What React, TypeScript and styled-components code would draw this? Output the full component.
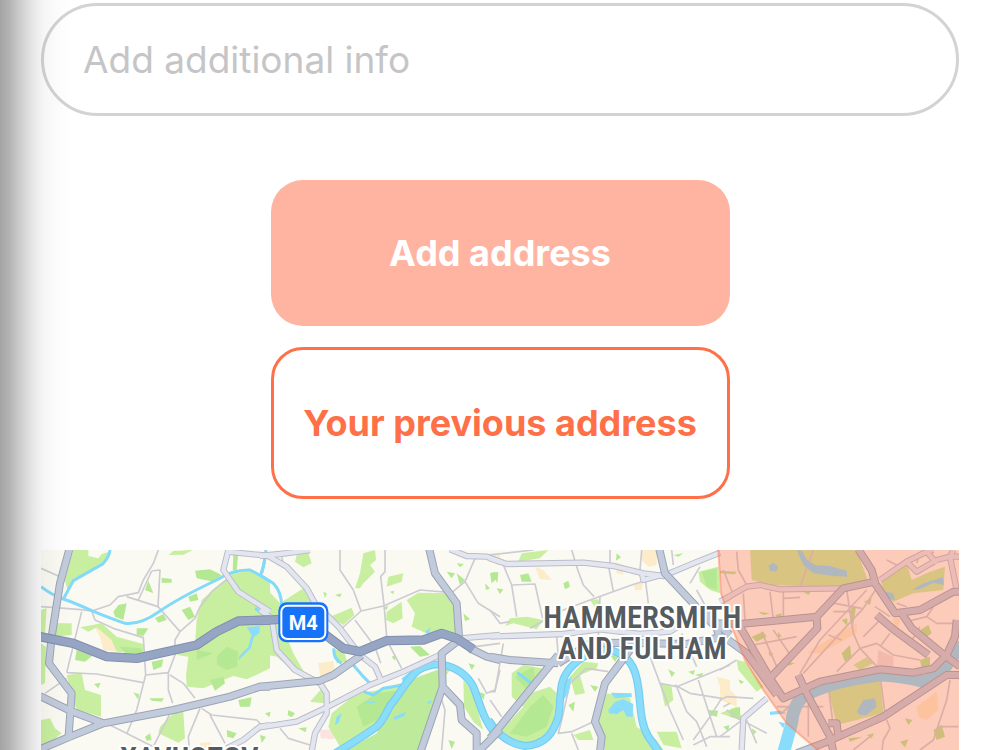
import React from "react";
import styled, { createGlobalStyle, css } from "styled-components";

const GlobalStyle = createGlobalStyle`
  *, *::before, *::after { box-sizing: border-box; }
  body {
    margin: 0;
    background: #ffffff;
    font-family: Inter, "Liberation Sans", sans-serif;
  }
`;

const Page = styled.main`
  position: relative;
  padding: 3px 41px 0;
`;

const EdgeShadow = styled.div`
  position: absolute;
  inset: 0 auto 0 0;
  width: 72px;
  pointer-events: none;
  background: linear-gradient(
    to right,
    rgba(0, 0, 0, 0.36) 0,
    rgba(0, 0, 0, 0.29) 10px,
    rgba(0, 0, 0, 0.19) 21px,
    rgba(0, 0, 0, 0.1) 32px,
    rgba(0, 0, 0, 0.04) 43px,
    rgba(0, 0, 0, 0.015) 56px,
    rgba(0, 0, 0, 0) 72px
  );
`;

const Form = styled.form`
  display: flex;
  flex-direction: column;
  align-items: center;
  gap: 64px;
`;

const InfoInput = styled.input`
  width: 100%;
  height: 113px;
  padding: 0 39px;
  border: 3px solid #d3d3d5;
  border-radius: 57px;
  background: #ffffff;
  color: #333333;
  font: 400 37px/44px Inter, "Liberation Sans", sans-serif;
  outline: none;

  &::placeholder {
    color: #c5c5c7;
    opacity: 1;
  }
`;

const Actions = styled.div`
  display: flex;
  flex-direction: column;
  gap: 21px;
  width: 50%;
`;

const ActionButton = styled.button<{ $outlined?: boolean }>`
  padding: 51px 0;
  border: 0;
  border-radius: 32px;
  background: #ffb4a2;
  color: #ffffff;
  font: 700 36px/44px Inter, "Liberation Sans", sans-serif;
  white-space: nowrap;
  cursor: pointer;

  ${({ $outlined }) =>
    $outlined &&
    css`
      border: 3px solid #ff7048;
      background: #ffffff;
      color: #ff7048;
    `}
`;

const MapFrame = styled.section`
  margin-top: 51px;
`;

const MapDrawing = styled.svg`
  display: block;
  width: 100%;
  height: auto;
`;

const AreaLabel = styled.text`
  font-family: "Liberation Sans Narrow", "Roboto Condensed", "DejaVu Sans Condensed", sans-serif;
  font-weight: 600;
  font-size: 92px;
  fill: #555b5e;
  stroke: #ffffff;
  stroke-width: 12px;
  stroke-linejoin: round;
  paint-order: stroke;
`;

const RoadSign = styled.text`
  font-family: Roboto, "Noto Sans", sans-serif;
  font-weight: 700;
  font-size: 60px;
  fill: #ffffff;
`;

/* The map is drawn in four side by side sheets; x is the left edge of each. */
type Sheet = { x: number; d: string };

const lightParks: Sheet[] = [
  { x: 0, d: "M130 30L175 30 175 48 205 55 215 42 238 35 222 75 130 122 112 150 105 120zM415 45L430 33 490 30 460 44zM75 250L125 250 125 285 70 290zM150 262L215 250 260 290 340 312 340 340 260 335 245 300 200 262 175 275zM500 240L515 180 560 140 590 118 610 100 660 92 720 130 720 385 650 418 610 408 520 445 470 440 468 405 475 350 440 345 495 315zM110 405L155 400 165 450 213 465 213 530 140 510 125 470zM33 210L50 205 45 280 33 280zM33 310L48 320 45 430 33 435zM33 540L60 535 75 565 95 580 70 600 33 628zM390 560L430 520 460 515 465 595 445 608 385 580z" },
  { x: 690, d: "M0 125L60 190 130 145 160 190 150 240 60 240 100 340 140 410 110 400 50 350 30 250 0 220zM110 45L145 38 155 70 130 82 105 65zM310 40L345 30 348 60 330 75 345 95 310 130 300 145 285 145 300 100zM385 110L430 100 425 125 380 140zM380 215L425 185 428 235 400 250 378 240zM210 230L275 203 283 225 250 255zM440 180L475 158 580 160 590 285 540 270 510 285 455 260 465 220zM220 330L250 330 262 365 230 370zM215 520L290 460 360 450 420 430 440 440 365 540 240 620 205 560zM150 485L190 440 195 490zM540 390L570 390 545 425zM610 420L635 450 650 500 670 570 640 545 612 500zM0 260L35 260 50 350 0 340z" },
  { x: 1380, d: "M95 40L175 30 150 55 85 65zM60 235L110 230 160 240 140 268 70 250 45 258zM625 95L685 80 690 160 660 150 630 125zM300 180L325 178 340 230 320 210zM65 400L100 375 155 385 145 430 120 460 180 440 200 460 190 560 140 605 80 610 35 570 100 500 65 470zM240 410L280 365 325 370 320 385 270 405 285 460 255 465zM350 460L420 475 440 560 500 600 520 630 345 630 325 540zM510 430L545 440 550 480 525 500zM250 585L300 570 310 600 265 600zM500 575L560 575 575 625 520 615z" },
  { x: 2070, d: "M90 30L410 30 445 125 370 140 240 138 150 135 95 120zM485 120L560 70 575 120 630 95 675 80 670 150 580 160 520 185 485 150zM325 450L480 410 490 520 350 555zM50 360L75 365 130 440 110 455 55 390zM400 375L440 352 460 370 420 390zM0 520L50 500 70 540 30 530z" },
];

const midParks: Sheet[] = [
  { x: 0, d: "M495 92L540 88 575 105 550 125 500 115zM345 150L355 122 370 160zM395 113L425 117 425 128 395 128zM250 215L265 195 290 190 280 240 255 230zM455 210L480 200 495 230 475 240zM475 170L500 160 505 180 480 185zM320 265L355 265 340 288 320 285zM375 235L400 222 410 240 385 248zM75 290L120 295 125 320 80 315zM140 330L190 345 165 365 135 360zM270 320L335 325 335 342 290 345zM560 350L590 320 625 335 620 380 590 390 562 375zM500 330L550 340 500 360zM540 420L580 410 585 430 555 452zM365 365L400 358 395 380 370 390zM192 432L212 428 205 445zM310 457L327 463 325 480zM358 475L402 475 395 485 365 482zM345 590L360 580 365 600 350 602zM625 480L665 472 660 500 630 500zM610 45L625 35 620 95 608 90zM590 570L620 580 610 595 592 590z" },
  { x: 690, d: "M190 155L200 160 195 175zM225 165L245 160 240 172zM390 155L402 152 400 163zM370 205L385 195 380 210zM560 95L585 100 575 115zM590 70L612 72 600 82zM590 100L615 120 600 135zM610 220L630 238 615 243zM675 130L690 145 678 150zM697 100L715 95 712 130zM450 320L480 318 510 345 480 350zM395 350L408 345 405 362zM625 370L645 375 635 390zM15 520L32 515 28 532zM85 510L105 520 95 532 83 525zM115 565L140 562 137 577zM0 585L18 590 5 610zM565 600L585 605 575 627zM655 455L675 462 670 480zM20 435L50 440 25 450zM290 500L350 460 420 450 370 530 310 560z" },
  { x: 1380, d: "M90 105L115 100 125 125 95 125zM220 130L235 122 240 140 225 148zM0 100L15 95 22 115 5 130zM20 145L40 148 30 163zM635 95L680 85 680 150 650 140zM380 40L393 52 378 62zM550 45L580 40 565 50zM535 388L555 398 545 412zM595 395L615 390 610 405zM615 405L640 398 635 412zM300 435L325 440 315 455zM235 495L255 485 250 515zM75 410L130 380 140 440 110 450zM120 500L160 465 190 500 170 560 110 590 60 580zM560 350L575 340 575 355zM655 510L685 512 680 530 660 525zM700 560L718 555 715 575zM360 345L385 350 375 365z" },
  { x: 2070, d: "M250 155L272 155 265 165zM165 225L185 220 182 240zM195 230L215 233 205 242zM365 240L382 235 382 258zM395 195L408 200 400 255 390 240zM432 185L455 175 450 195zM600 270L625 255 635 280 615 295zM365 340L390 315 395 355 375 365zM145 335L160 340 150 350zM95 290L130 275 140 290 110 305zM200 365L225 370 205 378zM175 275L185 290 172 292zM555 535L578 540 565 555zM640 570L665 555 675 590 650 600zM540 605L565 598 555 622zM385 595L430 590 390 605zM440 585L462 580 455 595zM30 510L60 500 60 540 30 530zM95 565L110 575 100 585zM55 418L72 425 62 433zM600 360L630 350 630 375 605 385zM0 92L50 95 45 103 0 100zM115 215L150 220 130 225z" },
];

const warmBlocks: Sheet[] = [
  { x: 0, d: "M190 255L225 270 258 315 258 335 220 330 210 290zM510 610L540 605 545 625 510 625z" },
  { x: 690, d: "M175 370L220 362 225 400 180 408zM685 40L720 38 720 60 700 60z" },
  { x: 1380, d: "M455 30L500 30 500 75 475 80 455 60zM375 65L400 75 400 105 380 100zM135 80L160 90 185 120 150 118zM430 130L460 125 455 150 435 150zM680 410L720 420 720 470 700 470z" },
  { x: 2070, d: "M590 500L650 455 655 510 620 540 595 530zM0 415L50 470 50 500 0 480zM260 340L370 270 410 250 410 280 300 340zM520 235L540 235 535 260 522 262z" },
];

const lakes: Sheet[] = [
  { x: 0, d: "M650 262L690 258 688 280 672 290 662 325 645 342 625 360 628 348 655 320 665 285z" },
  { x: 690, d: "M225 555L230 530 245 520 235 550zM400 532L438 515 432 528 405 540zM495 275L512 262 505 282zM500 488L515 480 512 492zM310 485L362 485 330 490zM425 415L480 372 455 420 430 430z" },
  { x: 1380, d: "M362 458L425 460 425 472 375 475zM355 510L375 485 400 478 430 492 428 530 410 530 400 510 380 523 357 520zM215 430L245 410 235 460 220 480z" },
  { x: 2070, d: "M145 78L160 68 175 80 168 95 150 92zM230 30L245 32 262 60 285 75 330 78 380 92 382 110 340 108 280 100 250 75zM575 150L610 130 668 112 672 135 640 128 600 148zM410 515L430 480 465 475 470 500 440 525 420 525zM497 155L520 160 525 180 505 178zM150 515L180 512 200 520 150 525zM175 545L195 550 190 565z" },
];

const streams: Sheet[] = [
  { x: 0, d: "M33 140Q65 165 100 177T185 212Q240 235 285 250Q330 255 387 215T560 120Q610 88 660 90Q690 105 720 125M240 30Q238 50 218 72L130 122 100 177M708 40L700 80 690 110M675 205L720 235" },
  { x: 690, d: "M18 30L12 70 5 100M0 105L40 130Q65 155 65 200M222 325Q218 355 245 370M280 375L310 410 330 430M310 455L340 465 370 445 430 435" },
  { x: 1380, d: "M82 398L130 435" },
];

const rivers: Sheet[] = [
  { x: 690, d: "M225 640Q300 595 350 560C380 530 380 505 400 485C430 445 440 420 475 390Q510 370 545 374Q610 385 640 440C660 490 670 540 705 580" },
  { x: 1380, d: "M-5 540Q40 610 105 618C165 615 190 580 205 530C215 460 205 425 240 385Q290 330 350 330C405 335 430 370 440 415C455 480 445 540 475 590L510 640" },
];

const thames: Sheet[] = [
  { x: 2070, d: "M190 640L215 550Q220 490 255 465Q330 430 400 418T480 405Q560 410 610 425Q660 410 680 375L725 310" },
];

const lanes: Sheet[] = [
  { x: 0, d: "M33 85L85 108M33 200Q120 205 185 213L240 195 265 170 325 158 340 120 370 70 385 30M365 93L390 90 384 200 290 170M365 93L325 180M185 213L195 240 250 265 340 293 347 405M384 200L450 275 495 235 510 200 545 155 590 118M155 215L110 398M110 398L200 402 340 428M347 405L415 398 435 345 435 300 450 275M347 405L320 510 290 582M415 398L415 450 428 490M420 405L460 430 495 475M45 460L110 415M240 555L370 620 428 505M510 505L475 590 478 628M515 505L545 525 680 540 700 560M540 525L585 610" },
  { x: 690, d: "M240 30L240 90 280 150 303 213 240 270M375 30L375 95 362 110 372 195 380 290M303 213L370 198 480 150 575 158 615 125 645 55M615 125L655 190 720 230M285 240L345 320 362 370M380 300L425 385M65 50L70 70M645 320L720 310M655 415L680 460 705 450 720 390M545 480L555 510 545 630M60 565L85 595 150 615" },
  { x: 1380, d: "M40 75L65 135 80 230M65 135L135 132 158 235M245 30L265 95 280 135 312 170M360 30L360 75M355 75L370 155M455 30L450 90M545 30L550 75M0 45L130 30M120 265L220 210 300 180 425 135 520 105M465 110L475 190M60 245L30 250 0 210M40 310L15 455 0 455M0 480L35 530M200 290L205 350M330 170L325 290M480 350L510 430 560 440 720 375M510 430L540 510 580 600M560 440L590 515 620 545 650 620M555 435L600 460 695 475 660 530 610 600M625 420L680 590M575 280L620 380M355 395L290 385 240 430 215 540 205 580 245 575 310 545M245 580L265 630M620 150L650 205M600 130L630 80M700 500L720 490M610 615L660 590 720 590" },
  { x: 2070, d: "M50 35L55 90 80 135M70 160L75 240M150 155L160 240M190 150L190 235M190 175L240 172M10 90L40 165M280 30L242 135M380 150L400 280 420 325 490 400M440 150L300 300 240 400M300 210L345 190 425 205M340 215L400 215M480 130L430 205 360 280 250 400M325 285L365 300M420 325L470 310 520 345 600 360M350 395L420 325M125 275L170 380M160 270L215 350M100 315L230 290M490 230L430 290M465 200L510 230M560 245L620 230 650 250M620 230L640 200M510 280L480 320M600 260L570 310M650 250L710 250M325 440L340 560M480 405L495 520M240 470L190 515M265 490L265 590M310 500L170 500M500 540L510 565 490 600 485 640M690 420L680 480 640 600 600 630M655 560L715 560M530 190L560 200M500 60L540 80M600 40L590 70M0 480L20 470 100 475M80 540L110 610M60 545L0 590M75 545L140 580M60 540L20 510M0 390L50 360M450 590L400 630" },
];

const localRoads: Sheet[] = [
  { x: 0, d: "M595 30L580 90 625 155 720 215M590 35L720 48M590 625L640 600 690 560 720 555" },
  { x: 690, d: "M0 48L60 42 150 30M20 45L80 80 140 145 165 190 240 265 300 345 345 380 362 418M0 210L35 235 50 330 105 390 180 430 200 460 200 520 165 580 155 635M0 562L110 545 200 502 330 435 430 395 550 340 600 295 720 285M570 28L620 48 680 50 720 65" },
  { x: 1380, d: "M0 55L50 72 280 68 370 78 460 100 520 108 610 70 690 38M455 95L460 120 515 105M0 290L220 282 330 268 450 282 540 275 560 262M690 185L720 170" },
  { x: 2070, d: "M0 185L80 140 120 135 180 148 370 145M65 630L70 535 140 475M480 120L560 65 620 35 640 30M560 65L590 95 650 60 690 50 717 50M620 35L650 70M690 50L710 150M700 30L690 50" },
];

const mainRoads: Sheet[] = [
  { x: 0, d: "M118 28L90 130 65 290 57 370 125 460 115 600M30 468L120 512 220 550M30 628L120 590 220 550 430 510 600 470 690 440 720 440" },
  { x: 690, d: "M0 440L180 422 220 405 305 345M508 28L525 100 590 190 597 290M597 300L545 340 548 440 480 640M548 440L600 495 605 540 650 580 650 640M630 325L680 350 720 360M720 570L655 635" },
  { x: 1380, d: "M0 350L60 360 180 368 205 370M205 345L160 400 30 560 0 595M420 330L345 430 315 545 335 590 330 635M508 28L525 100 600 180 680 265 700 330M205 370L300 310 400 308 590 312 700 290M640 210L720 285" },
  { x: 2070, d: "M415 28L455 90 465 125 370 145 290 230 60 252 0 250M60 260L150 415M290 230L292 265 150 415 190 475 300 425 480 388 580 398 640 385 680 345 705 290 710 240M25 300L80 340 170 465M465 130L525 220 600 210 700 155 720 155M470 225L520 268 625 345M545 220L575 265 660 335 720 380M235 405L260 460 330 590 340 635M230 640L310 610 490 530 680 405 720 405M325 550L350 550 355 590" },
];

const motorway: Sheet[] = [
  { x: 0, d: "M30 290L130 310 230 350 320 355 500 315 560 275 625 243 720 240" },
  { x: 690, d: "M0 242L60 238M190 280L250 325 300 335 380 302 490 300 545 280 590 295 640 328" },
];

type RoadProps = { sheets: Sheet[]; casing: string; fill: string; width: number };

function Fills({ sheets, color }: { sheets: Sheet[]; color: string }) {
  return (
    <g fill={color}>
      {sheets.map((s) => (
        <path key={s.x} d={s.d} transform={`translate(${s.x} 0)`} />
      ))}
    </g>
  );
}

function Strokes({ sheets, color, width }: { sheets: Sheet[]; color: string; width: number }) {
  return (
    <g fill="none" stroke={color} strokeWidth={width} strokeLinejoin="round">
      {sheets.map((s) => (
        <path key={s.x} d={s.d} transform={`translate(${s.x} 0)`} />
      ))}
    </g>
  );
}

function Roads({ sheets, casing, fill, width }: RoadProps) {
  return (
    <>
      <Strokes sheets={sheets} color={casing} width={width} />
      <Strokes sheets={sheets} color={fill} width={width - 6} />
    </>
  );
}

function DeliveryMap() {
  return (
    <MapDrawing viewBox="33 30 2754 600" role="img" aria-label="Map of west London">
      <rect x="33" y="30" width="2754" height="600" fill="#fbfaf2" />
      <Fills sheets={warmBlocks} color="#fcecc9" />
      <path d="M870 570L915 568 912 598 872 595z" fill="#fbe3df" />
      <path d="M2545 330L2590 350 2590 385 2540 385z" fill="#ecdfe0" />
      <Fills sheets={lightParks} color="#c8efa0" />
      <path
        d="M1235 440L1180 640 930 640 1040 580 1080 505 1140 420 1235 385z"
        fill="#bdea9b"
      />
      <Fills sheets={midParks} color="#b5e892" />
      <Strokes sheets={lanes} color="#cdccd3" width={5} />
      <Fills sheets={lakes} color="#8adcfb" />
      <Strokes sheets={streams} color="#82dafa" width={9} />
      <Strokes sheets={rivers} color="#74cdf1" width={24} />
      <Strokes sheets={rivers} color="#8adcfb" width={17} />
      <Strokes sheets={thames} color="#8adcfb" width={38} />
      <Roads sheets={localRoads} casing="#babdcc" fill="#e3e5ef" width={19} />
      <Roads sheets={mainRoads} casing="#9ba4b7" fill="#c2cbdb" width={24} />
      <Roads sheets={motorway} casing="#8290ae" fill="#97a5c5" width={28} />
      <path
        d="M2065 30L2073 160 2105 260 2145 360 2200 450 2270 550 2375 640 2787 640 2787 30z"
        fill="#ff6e46"
        fillOpacity="0.33"
      />
      <path
        d="M2065 30L2073 160 2105 260 2145 360 2200 450 2270 550 2375 640"
        fill="none"
        stroke="#ff7650"
        strokeOpacity="0.45"
        strokeWidth="6"
      />
      <rect x="745" y="187" width="150" height="120" rx="25" fill="#1673f8" />
      <rect x="754" y="197" width="132" height="100" rx="18" fill="none" stroke="#ffffff" strokeWidth="6" />
      <RoadSign x="820" y="270" textAnchor="middle">M4</RoadSign>
      <AreaLabel textAnchor="middle">
        <tspan x="1837" y="265">HAMMERSMITH</tspan>
        <tspan x="1837" y="357">AND FULHAM</tspan>
      </AreaLabel>
      <AreaLabel x="478" y="686" textAnchor="middle">XAVUOZGV</AreaLabel>
    </MapDrawing>
  );
}

export default function App() {
  return (
    <>
      <GlobalStyle />
      <Page>
        <Form onSubmit={(event) => event.preventDefault()}>
          <InfoInput type="text" aria-label="Additional info" placeholder="Add additional info" />
          <Actions>
            <ActionButton type="submit">Add address</ActionButton>
            <ActionButton type="button" $outlined>
              Your previous address
            </ActionButton>
          </Actions>
        </Form>
        <MapFrame>
          <DeliveryMap />
        </MapFrame>
        <EdgeShadow />
      </Page>
    </>
  );
}
